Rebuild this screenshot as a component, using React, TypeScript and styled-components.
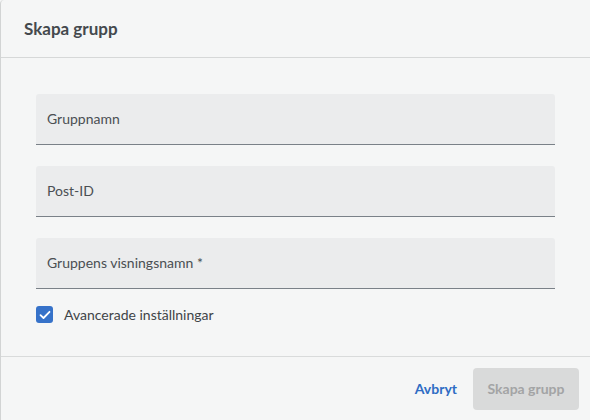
import React from 'react'
import styled, { createGlobalStyle } from 'styled-components'

const GlobalStyle = createGlobalStyle`
  html, body {
    margin: 0;
    padding: 0;
    background: #f5f6f6;
  }
  body {
    font-family: Lato, "Noto Sans", sans-serif;
  }
`

const Dialog = styled.div`
  width: 590px;
  height: 420px;
  box-sizing: border-box;
  background: #f5f6f6;
  border-left: 1px solid #d2d4d4;
  border-top-left-radius: 4px;
  display: flex;
  flex-direction: column;
  color: #3f4448;
`

const Header = styled.div`
  height: 58px;
  flex-shrink: 0;
  box-sizing: border-box;
  padding: 0 23px;
  display: flex;
  align-items: center;
  border-bottom: 1.5px solid #d6d8d8;
`

const Title = styled.h1`
  margin: 0;
  font-size: 17px;
  font-weight: 700;
  color: #44494d;
`

const Body = styled.div`
  flex: 1;
  padding: 36px 35px 0 35px;
  display: flex;
  flex-direction: column;
  gap: 21px;
`

const Field = styled.div`
  height: 51px;
  box-sizing: border-box;
  width: 519px;
  background: #ebeced;
  border-radius: 3px 3px 0 0;
  border-bottom: 1px solid #7a8188;
  padding: 0 11px 2px;
  display: flex;
  align-items: center;
  font-size: 14px;
  color: #4a4f53;
`

const CheckRow = styled.label`
  display: flex;
  align-items: center;
  gap: 11px;
  margin-top: -4px;
  font-size: 14px;
  color: #3f4448;
`

const Box = styled.span`
  width: 17px;
  height: 17px;
  border-radius: 3px;
  background: #3672c9;
  display: flex;
  align-items: center;
  justify-content: center;
`

const Footer = styled.div`
  height: 64px;
  flex-shrink: 0;
  box-sizing: border-box;
  border-top: 1.5px solid #d9dbdb;
  display: flex;
  align-items: center;
  justify-content: flex-end;
  padding: 0 11px 0 0;
  gap: 16px;
`

const LinkButton = styled.button`
  background: none;
  border: none;
  padding: 0;
  font-family: inherit;
  font-size: 14px;
  font-weight: 700;
  color: #2e6cc4;
  cursor: pointer;
`

const PrimaryButton = styled.button`
  width: 106px;
  height: 42px;
  border: none;
  border-radius: 4px;
  background: #d9dada;
  color: #a3a4a5;
  font-family: inherit;
  font-size: 14px;
  font-weight: 700;
`

export default function App() {
  return (
    <>
      <GlobalStyle />
      <Dialog>
        <Header>
          <Title>Skapa grupp</Title>
        </Header>
        <Body>
          <Field>Gruppnamn</Field>
          <Field>Post-ID</Field>
          <Field>Gruppens visningsnamn *</Field>
          <CheckRow>
            <Box>
              <svg width="12" height="10" viewBox="0 0 12 10">
                <path d="M1.5 5.2 L4.5 8 L10.5 1.8" fill="none" stroke="#fff" strokeWidth="1.8" strokeLinecap="round" strokeLinejoin="round" />
              </svg>
            </Box>
            Avancerade inställningar
          </CheckRow>
        </Body>
        <Footer>
          <LinkButton>Avbryt</LinkButton>
          <PrimaryButton>Skapa grupp</PrimaryButton>
        </Footer>
      </Dialog>
    </>
  )
}
